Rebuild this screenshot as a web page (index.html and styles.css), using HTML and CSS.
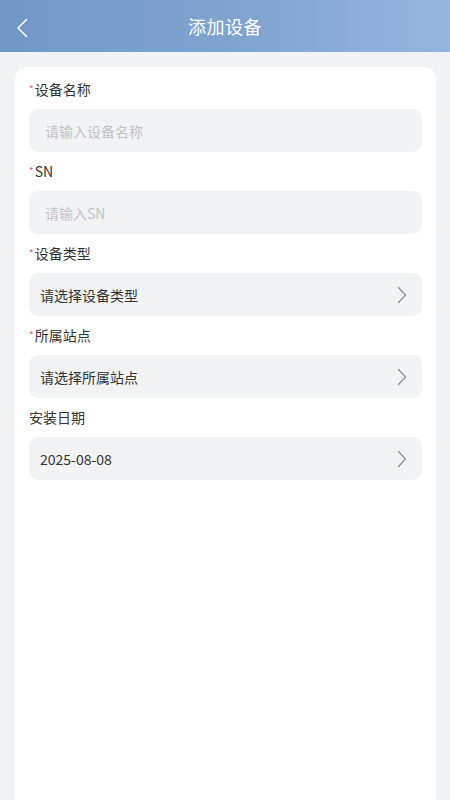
FILE: index.html
```html
<!DOCTYPE html>
<html>
<head>
<meta charset="utf-8">
<link rel="stylesheet" href="styles.css">
</head>
<body>
<div class="m-navBar">
    <span class="back">
        <svg width="14" height="22" viewBox="0 0 14 22"><path d="M10.5 2.5L2 11l8.5 8.5" fill="none" stroke="#fff" stroke-width="1.5" stroke-linecap="round" stroke-linejoin="round"/></svg>
    </span>
    <span class="title">添加设备</span>
</div>
<div class="m-form">
    <div class="label"><i class="req">*</i>设备名称</div>
    <div class="field input"><span class="ph">请输入设备名称</span></div>

    <div class="label"><i class="req">*</i>SN</div>
    <div class="field input"><span class="ph">请输入SN</span></div>

    <div class="label"><i class="req">*</i>设备类型</div>
    <div class="field select"><span>请选择设备类型</span><svg width="12" height="18" viewBox="0 0 12 18"><path d="M2.5 1.5l7 7.5-7 7.5" fill="none" stroke="#8a8d93" stroke-width="1.2" stroke-linecap="round" stroke-linejoin="round"/></svg></div>

    <div class="label"><i class="req">*</i>所属站点</div>
    <div class="field select"><span>请选择所属站点</span><svg width="12" height="18" viewBox="0 0 12 18"><path d="M2.5 1.5l7 7.5-7 7.5" fill="none" stroke="#8a8d93" stroke-width="1.2" stroke-linecap="round" stroke-linejoin="round"/></svg></div>

    <div class="label">安装日期</div>
    <div class="field select"><span>2025-08-08</span><svg width="12" height="18" viewBox="0 0 12 18"><path d="M2.5 1.5l7 7.5-7 7.5" fill="none" stroke="#8a8d93" stroke-width="1.2" stroke-linecap="round" stroke-linejoin="round"/></svg></div>
</div>
</body>
</html>
```

FILE: styles.css
```css
html, body {margin: 0; padding: 0;}
body {background: #f2f3f5; font: 14px/20px "Noto Sans CJK SC", "Noto Sans", sans-serif; color: #333; height: 800px; overflow: hidden;}
.m-navBar {height: 52px; display: flex; align-items: center; justify-content: center; position: relative; background: linear-gradient(90deg, #6f97c6 0%, #82a6d1 60%, #95b5de 100%);}
.m-navBar .back {position: absolute; left: 16px; top: 17px; width: 14px; height: 22px;}
.m-navBar .back svg {display: block;}
.m-navBar .title {color: #fff; font-size: 18px; line-height: 24px; letter-spacing: 0.5px;}
.m-form {margin: 15px 14px 0 15px; padding: 12px 14px 0; background: #fff; border-radius: 12px 12px 0 0; min-height: 760px;}
.m-form .label {height: 20px; line-height: 20px; margin-bottom: 10px; color: #333;}
.m-form .req {font-style: normal; color: #e0605c; font-size: 10px; margin-right: 1px; display: inline-block; vertical-align: top; line-height: 10px; margin-top: 5px;}
.m-form .field {height: 43px; margin-bottom: 9px; background: #f2f3f5; border-radius: 9px; display: flex; align-items: center; box-sizing: border-box;}
.m-form .input {padding: 0 16px;}
.m-form .input .ph {color: #c0c3c9;}
.m-form .select {padding: 0 14px 0 11px; justify-content: space-between; color: #333;}
.m-form .select svg {display: block;}
```
